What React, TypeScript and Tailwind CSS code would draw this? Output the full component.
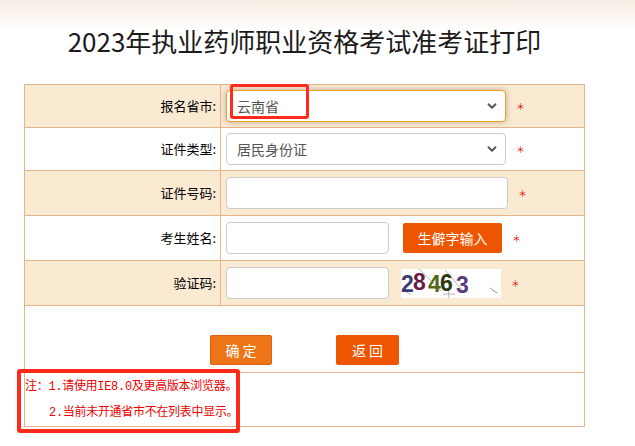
import { ChevronDown } from "lucide-react";

const sans = "font-['Noto_Sans_CJK_SC','Noto_Sans',sans-serif]";

function Star() {
  return (
    <span className="ml-[10px] text-[9px] leading-none text-[#e60000] font-['Noto_Sans_CJK_SC',sans-serif]">
      ＊
    </span>
  );
}

function Row({
  label,
  shaded,
  tall,
  children,
}: {
  label: string;
  shaded?: boolean;
  tall?: boolean;
  children: React.ReactNode;
}) {
  return (
    <div
      className={`flex border-b border-[#e6b48a] ${tall ? "h-[45px]" : "h-[43px]"} ${
        shaded ? "bg-[#faead2]" : "bg-white"
      }`}
    >
      <div className="flex w-[196px] items-center justify-end border-r border-[#e6b48a] pr-[4px] text-[13px] text-black">
        {label}
      </div>
      <div className="flex flex-1 items-center pl-[5px]">{children}</div>
    </div>
  );
}

function Select({ value, focused }: { value: string; focused?: boolean }) {
  return (
    <div
      className={`flex h-[32px] w-[280px] items-center justify-between rounded-[4px] border bg-white pl-[10px] pr-[6px] text-[14px] text-[#555] ${
        focused
          ? "border-[#f0a01e] shadow-[0_0_6px_rgba(0,0,0,0.28)]"
          : "border-[#cccccc]"
      }`}
    >
      <span>{value}</span>
      <ChevronDown className="h-[14px] w-[14px] text-[#555]" strokeWidth={3.2} />
    </div>
  );
}

function Captcha() {
  return (
    <svg width="100" height="29" viewBox="0 0 100 29" className="block">
      <rect width="100" height="29" fill="#ffffff" />
      <line x1="18" y1="0" x2="40" y2="22" stroke="#a4a4aa" strokeWidth="0.7" />
      <line x1="44" y1="1" x2="62" y2="22" stroke="#9a9aa0" strokeWidth="0.7" />
      <line x1="1" y1="20" x2="10" y2="26" stroke="#9a9aa0" strokeWidth="0.7" />
      <line x1="89" y1="19" x2="96" y2="24" stroke="#808088" strokeWidth="0.9" />
      <line x1="47" y1="20" x2="48" y2="29" stroke="#9a9aa0" strokeWidth="0.7" />
      <line x1="42" y1="25" x2="54" y2="25" stroke="#9a9aa0" strokeWidth="0.7" />
      <g fontFamily="'Liberation Sans', Arial, sans-serif" fontWeight="bold" fontSize="23">
        <text x="0" y="23" fill="#3e3b74">2</text>
        <text x="12" y="21" fill="#6a1a42">8</text>
        <text x="27" y="23" fill="#52691d">4</text>
        <text x="39" y="22" fill="#2c3b12">6</text>
        <text x="55" y="24" fill="#5a3a82">3</text>
      </g>
    </svg>
  );
}

function TextInput({ width }: { width: string }) {
  return <div className={`h-[32px] ${width} rounded-[4px] border border-[#cccccc] bg-white`} />;
}

export default function App() {
  return (
    <div
      className={`relative h-[446px] w-[635px] overflow-hidden bg-[linear-gradient(180deg,#f7ece3_0px,#ffffff_30px)] ${sans}`}
    >
      <div className="ml-[24px] w-[561px]">
        <h1 className="pt-[21px] pb-[24px] text-center text-[26px] leading-[39px] font-normal text-[#1e1a1a]">
          2023年执业药师职业资格考试准考证打印
        </h1>

        <div className="border-x border-t border-[#e6b48a]">
          <Row label="报名省市:" shaded>
            <Select value="云南省" focused />
            <Star />
          </Row>
          <Row label="证件类型:">
            <Select value="居民身份证" />
            <Star />
          </Row>
          <Row label="证件号码:" shaded tall>
            <TextInput width="w-[282px]" />
            <Star />
          </Row>
          <Row label="考生姓名:" tall>
            <TextInput width="w-[163px]" />
            <button className="ml-[14px] h-[30px] w-[99px] rounded-[2px] bg-[#ee5500] text-[14px] text-white">
              生僻字输入
            </button>
            <Star />
          </Row>
          <Row label="验证码:" shaded tall>
            <TextInput width="w-[163px]" />
            <div className="ml-[12px]">
              <Captcha />
            </div>
            <Star />
          </Row>

          <div className="flex h-[67px] justify-center gap-[64px] border-b border-[#e6b48a] bg-white pt-[29px]">
            <button className="h-[30px] w-[62px] rounded-[2px] border border-[#d9600c] bg-[#ed7518] text-[14px] text-white">
              确 定
            </button>
            <button className="h-[30px] w-[63px] rounded-[2px] bg-[#ee5500] text-[14px] text-white">
              返 回
            </button>
          </div>

          <div className="h-[54px] border-b border-[#e6b48a] bg-white pt-[1px] text-[12px] leading-[26px] tracking-[-0.3px] text-[#ee0000] font-['Liberation_Mono','Noto_Sans_CJK_SC',monospace]">
            <p>注：1.请使用IE8.0及更高版本浏览器。</p>
            <p className="pl-[24px]">2.当前未开通省市不在列表中显示。</p>
          </div>
        </div>
      </div>

      <div className="absolute left-[230px] top-[84px] h-[35px] w-[79px] rounded-[3px] border-[3px] border-[#ff2a1a]" />
      <div className="absolute left-[17px] top-[369px] h-[64px] w-[223px] rounded-[3px] border-[4px] border-[#ff2a1a]" />
    </div>
  );
}
